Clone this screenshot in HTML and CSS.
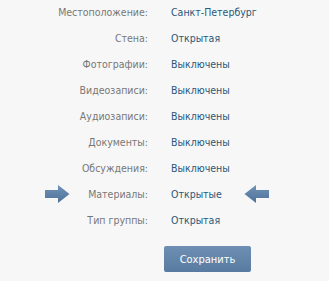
FILE: index.html
```html
<!DOCTYPE html>
<html lang="ru">
<head>
<meta charset="utf-8">
<title>Настройки группы</title>
<link rel="stylesheet" href="styles.css">
</head>
<body>
<div class="settings">
  <div class="row"><div class="label">Местоположение:</div><div class="value">Санкт-Петербург</div></div>
  <div class="row"><div class="label">Стена:</div><div class="value">Открытая</div></div>
  <div class="row"><div class="label">Фотографии:</div><div class="value">Выключены</div></div>
  <div class="row"><div class="label">Видеозаписи:</div><div class="value">Выключены</div></div>
  <div class="row"><div class="label">Аудиозаписи:</div><div class="value">Выключены</div></div>
  <div class="row"><div class="label">Документы:</div><div class="value">Выключены</div></div>
  <div class="row"><div class="label">Обсуждения:</div><div class="value">Выключены</div></div>
  <div class="row marked">
    <svg class="arrow arrow-left" width="25" height="18" viewBox="0 0 25 18"><use href="#arr"/></svg>
    <div class="label">Материалы:</div><div class="value">Открытые</div>
    <svg class="arrow arrow-right" width="25" height="18" viewBox="0 0 25 18"><use href="#arr"/></svg>
  </div>
  <div class="row"><div class="label">Тип группы:</div><div class="value">Открытая</div></div>
  <div class="actions"><button class="btn">Сохранить</button></div>
</div>
<svg width="0" height="0" class="defs">
  <defs>
    <linearGradient id="ag" x1="0" y1="0" x2="0" y2="1">
      <stop offset="0" stop-color="#7092b8"/>
      <stop offset="1" stop-color="#4f729a"/>
    </linearGradient>
    <symbol id="arr" viewBox="0 0 25 18">
      <path d="M0 5 H13 V0 L24.5 9 L13 18 V13 H0 Z" fill="url(#ag)"/>
    </symbol>
  </defs>
</svg>
</body>
</html>
```
FILE: styles.css
```css
html, body {
  margin: 0;
  padding: 0;
  background: #f7f7f7;
}
body {
  width: 329px;
  height: 281px;
  overflow: hidden;
  font-family: "DejaVu Sans Condensed", "DejaVu Sans", sans-serif;
  font-size: 10.5px;
}
.settings {
  padding-top: 0;
}
.row {
  position: relative;
  display: grid;
  grid-template-columns: 148px 1fr;
  column-gap: 23px;
  height: 26px;
  box-sizing: border-box;
  padding-bottom: 2px;
  align-items: center;
}
.label {
  text-align: right;
  color: #777777;
}
.value {
  color: #2b587a;
}
.arrow {
  position: absolute;
  top: 3px;
}
.arrow-left {
  left: 45px;
}
.arrow-right {
  left: 244px;
  transform: scaleX(-1);
}
.actions {
  padding: 12px 0 0 164px;
}
.btn {
  width: 87px;
  height: 26px;
  border: 0;
  border-radius: 2px;
  background: linear-gradient(#6e8fb3, #5a7ba1);
  color: #fff;
  font-family: inherit;
  font-size: 11px;
  padding: 0;
}
.defs {
  position: absolute;
}
```
